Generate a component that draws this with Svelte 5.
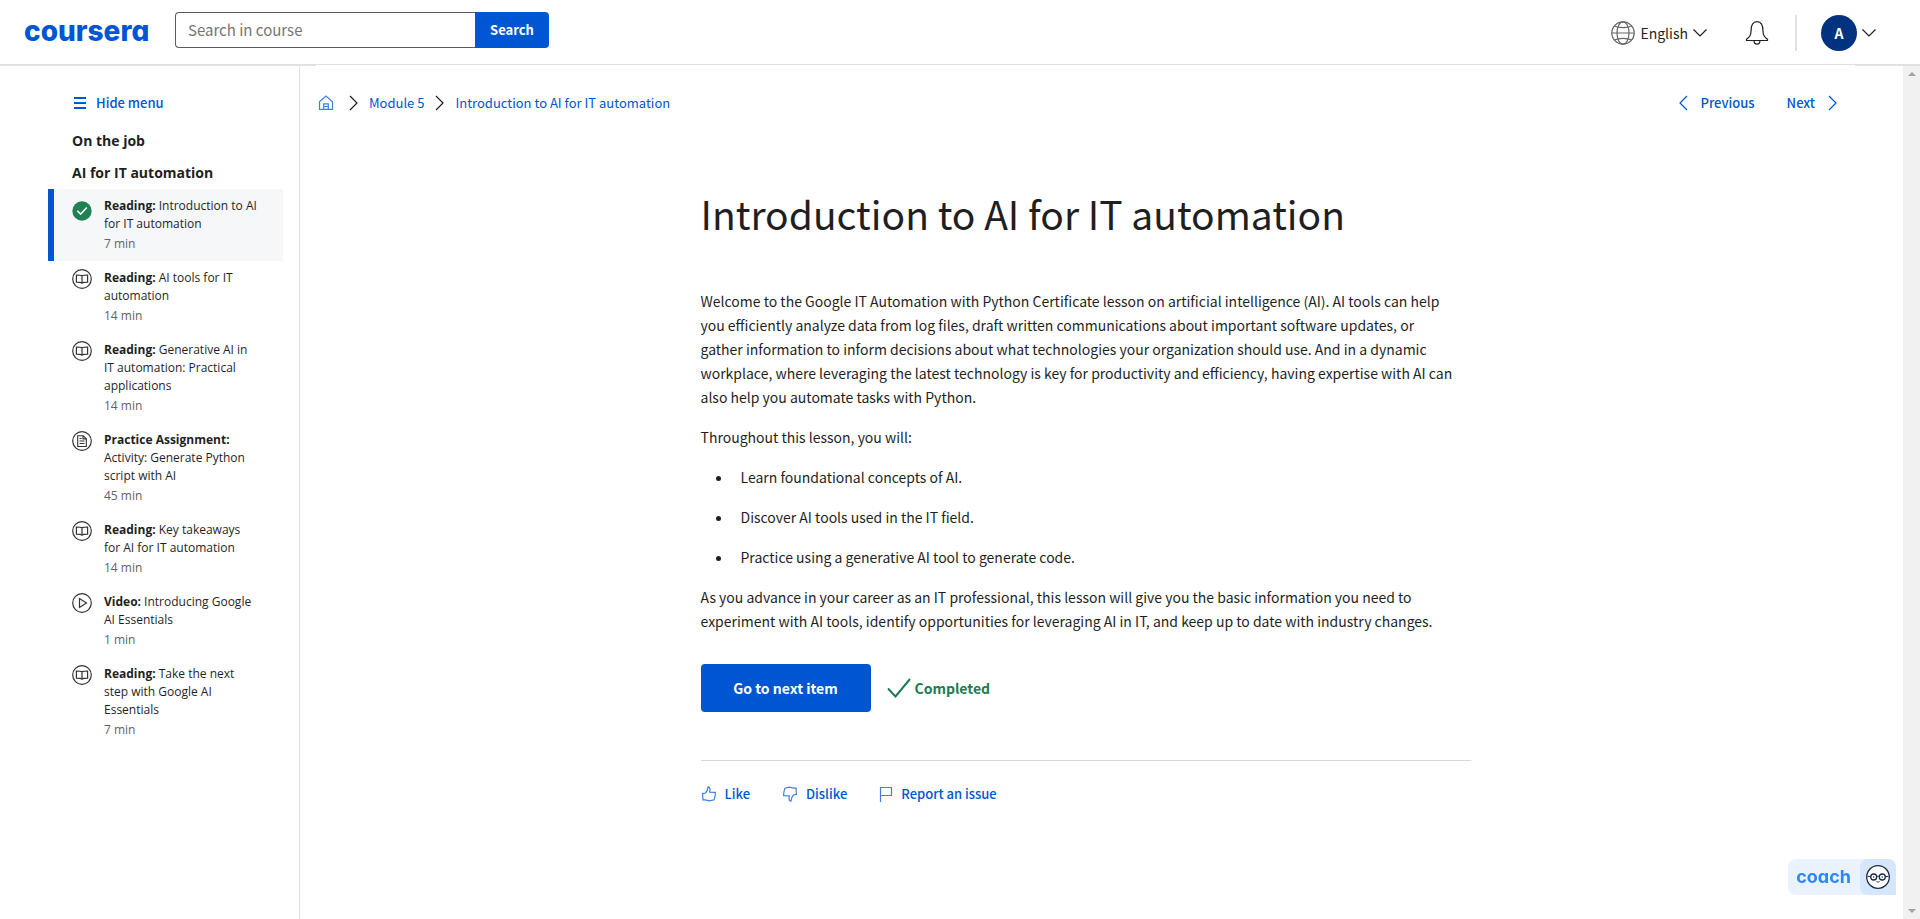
<script lang="ts">
  type Item = { kind: string; title: string; time: string; icon: 'book' | 'doc' | 'play' | 'done' };

  const items: Item[] = [
    { kind: 'Reading', title: 'Introduction to AI for IT automation', time: '7 min', icon: 'done' },
    { kind: 'Reading', title: 'AI tools for IT automation', time: '14 min', icon: 'book' },
    { kind: 'Reading', title: 'Generative AI in IT automation: Practical applications', time: '14 min', icon: 'book' },
    { kind: 'Practice Assignment', title: 'Activity: Generate Python script with AI', time: '45 min', icon: 'doc' },
    { kind: 'Reading', title: 'Key takeaways for AI for IT automation', time: '14 min', icon: 'book' },
    { kind: 'Video', title: 'Introducing Google AI Essentials', time: '1 min', icon: 'play' },
    { kind: 'Reading', title: 'Take the next step with Google AI Essentials', time: '7 min', icon: 'book' },
  ];

  const goals = [
    'Learn foundational concepts of AI.',
    'Discover AI tools used in the IT field.',
    'Practice using a generative AI tool to generate code.',
  ];
</script>

<div class="page">
  <header>
    <a class="logo" href="#home">coursera</a>
    <form class="search" role="search" onsubmit={(e) => e.preventDefault()}>
      <input type="text" aria-label="Search in course" placeholder="Search in course" />
      <button type="submit">Search</button>
    </form>
    <div class="tools">
      <button class="lang">
        <svg width="24" height="24" viewBox="0 0 24 24" fill="none" stroke="#666" stroke-width="1.2">
          <circle cx="12" cy="12" r="11.2" />
          <ellipse cx="12" cy="12" rx="6" ry="11.2" />
          <path d="M.8 12h22.4M3.400 5c4.500 2.200 12.700 2.200 17.200 0M3.400 19c4.500-2.200 12.700-2.200 17.200 0" />
        </svg>
        <span>English</span>
        <svg class="caret" width="14" height="8" viewBox="0 0 14 8" fill="none" stroke="#1f1f1f" stroke-width="1.2"><path d="M.5.5 7 7 13.500.5" /></svg>
      </button>
      <button class="bell" aria-label="Notifications">
        <svg width="24" height="24" viewBox="0 0 24 24" fill="none" stroke="#1f1f1f" stroke-width="1.2">
          <path d="M1.500 19.500v-1.300c2.500-1.600 4.500-4.500 4.500-8C6 4 8 .7 12 .7s6 3.300 6 9.500c0 3.500 2 6.400 4.500 8v1.300ZM9 19.500c0 2 1.300 3.600 3 3.600s3-1.600 3-3.600" />
        </svg>
      </button>
      <button class="account" aria-label="Account">
        <span class="avatar">A</span>
        <svg class="caret" width="14" height="8" viewBox="0 0 14 8" fill="none" stroke="#1f1f1f" stroke-width="1.2"><path d="M.5.5 7 7 13.500.5" /></svg>
      </button>
    </div>
  </header>

  <div class="body">
    <aside>
      <button class="hide">
        <svg width="12" height="12" viewBox="0 0 12 12" fill="#0056d2"><path d="M0 0h12v2H0zM0 5h12v2H0zM0 10h12v2H0z" /></svg>
        Hide menu
      </button>
      <h2>On the job</h2>
      <h3>AI for IT automation</h3>
      <nav aria-label="Lesson items">
        {#each items as item}
          <a class="item" class:active={item.icon === 'done'} href="#item">
            <svg width="20" height="20" viewBox="0 0 20 20" fill="none" stroke="#333" stroke-width="1.200">
              {#if item.icon === 'done'}
                <circle cx="10" cy="10" r="9.700" fill="#1d8354" stroke="none" />
                <path d="m5.300 9.800 3.400 3.300 6.100-6.500" stroke="#fff" stroke-width="1.500" />
              {:else}
                <circle cx="10" cy="10" r="9.300" />
                {#if item.icon === 'book'}
                  <path d="M10 6.900c-.8-.7-1.800-.9-5.600-.9v7.200c3.800 0 4.800.2 5.600 1 .8-.8 1.800-1 5.600-1V6c-3.800 0-4.800.2-5.600.9Zm0 0v7.800" />
                {:else if item.icon === 'doc'}
                  <path d="M5.700 4.700h5.500l3.100 3v7.800H5.700ZM11 4.700v3.200h3.300M7.500 7.500h2M7.500 10h5M7.500 12.500h5" stroke-width="1.100" />
                {:else}
                  <path d="M7.500 5.500v9l7-4.500Z" />
                {/if}
              {/if}
            </svg>
            <span class="label"><span><b>{item.kind}:</b> {item.title}</span><small>{item.time}</small></span>
          </a>
        {/each}
      </nav>
    </aside>

    <main>
      <div class="bar">
        <nav class="crumbs" aria-label="Breadcrumb">
          <a class="homelink" href="#home" aria-label="Home">
            <svg width="16" height="16" viewBox="0 0 16 16" fill="none" stroke="#3f7fde" stroke-width="1.200">
              <path d="M1.500 6.700 8 1l6.500 5.700v7.600h-13ZM5.700 14.300V8.900h4.600v5.400M5.700 11.500h4.600" />
            </svg>
          </a>
          <svg class="chev" width="9" height="16" viewBox="0 0 9 16" fill="none" stroke="#1f1f1f" stroke-width="1.200"><path d="m1 1 7 7-7 7" /></svg>
          <a href="#module">Module 5</a>
          <svg class="chev" width="9" height="16" viewBox="0 0 9 16" fill="none" stroke="#1f1f1f" stroke-width="1.200"><path d="m1 1 7 7-7 7" /></svg>
          <a href="#lesson">Introduction to AI for IT automation</a>
        </nav>
        <div class="pager">
          <a href="#previous"><svg width="9" height="16" viewBox="0 0 9 16" fill="none" stroke="#0056d2" stroke-width="1.200"><path d="M8 1 1 8l7 7" /></svg>Previous</a>
          <a href="#next">Next<svg width="9" height="16" viewBox="0 0 9 16" fill="none" stroke="#0056d2" stroke-width="1.200"><path d="m1 1 7 7-7 7" /></svg></a>
        </div>
      </div>

      <article>
        <h1>Introduction to AI for IT automation</h1>
        <p>Welcome to the Google IT Automation with Python Certificate lesson on artificial intelligence (AI). AI tools can help you efficiently analyze data from log files, draft written communications about important software updates, or gather information to inform decisions about what technologies your organization should use. And in a dynamic workplace, where leveraging the latest technology is key for productivity and efficiency, having expertise with AI can also help you automate tasks with Python.</p>
        <p>Throughout this lesson, you will:</p>
        <ul>
          {#each goals as goal}
            <li>{goal}</li>
          {/each}
        </ul>
        <p>As you advance in your career as an IT professional, this lesson will give you the basic information you need to experiment with AI tools, identify opportunities for leveraging AI in IT, and keep up to date with industry changes.</p>
        <div class="next">
          <button class="primary">Go to next item</button>
          <span class="completed">
            <svg width="24" height="20" viewBox="0 0 24 20" fill="none" stroke="#1d7c50" stroke-width="2"><path d="m1 10.500 7.500 8L23 1" /></svg>
            <span>Completed</span>
          </span>
        </div>
        <div class="feedback">
          <button>
            <svg width="16" height="16" viewBox="0 0 16 16" fill="none" stroke="#3f7fde" stroke-width="1.200"><path d="M1.600 7.600 4.500 7C6 5.500 6.800 3.800 7 .9c1.900.2 2.400 1.800 1.700 5.200l5.700.3-.3 3.600-1 3.800-4.600 1-4.300-.9H1.900Z" /></svg>
            Like
          </button>
          <button>
            <svg width="16" height="16" viewBox="0 0 16 16" fill="none" stroke="#3f7fde" stroke-width="1.200"><path d="M14.400 8.400 11.500 9C10 10.500 9.200 12.200 9 15.100c-1.900-.2-2.400-1.800-1.700-5.200L1.600 9.600 1.900 6l1-3.800 4.600-1 4.300.9h2.300Z" /></svg>
            Dislike
          </button>
          <button>
            <svg width="14" height="16" viewBox="0 0 14 16" fill="none" stroke="#3f7fde" stroke-width="1.200"><path d="M1.500 16V1.500h11v8h-11" /></svg>
            Report an issue
          </button>
        </div>
      </article>
    </main>

    <div class="scroll" aria-hidden="true"><i class="up"></i><i class="down"></i></div>
  </div>

  <button class="coach">
    <span class="word">coach</span>
    <span class="face">
      <svg width="24" height="24" viewBox="0 0 24 24" fill="none" stroke="#1c2b45" stroke-width="1.300">
        <circle cx="12" cy="12" r="11.300" fill="#fff" />
        <circle cx="7.700" cy="12" r="3" /><circle cx="16.300" cy="12" r="3" />
        <path d="M10.700 11.600c.8-.5 1.800-.5 2.600 0M1.500 11.300l3.200.3M22.500 11.300l-3.200.3M10.500 16.500c1 .7 2 .7 3 0" stroke-width="1" />
        <circle cx="7.700" cy="12" r=".7" fill="#1c2b45" stroke="none" /><circle cx="16.300" cy="12" r=".7" fill="#1c2b45" stroke="none" />
      </svg>
    </span>
  </button>
</div>

<style>
  :global(body) { margin: 0; background: #fff; }
  .page {
    --blue: #0056d2;
    min-height: 100vh;
    display: flex;
    flex-direction: column;
    color: #1f1f1f;
    font-family: "Noto Sans CJK SC", "Noto Sans", sans-serif;
    font-size: 14px;
    line-height: 24px;
  }
  *, *::before { box-sizing: border-box; }
  button { border: 0; padding: 0; background: none; font: inherit; color: inherit; cursor: pointer; }
  a { color: var(--blue); text-decoration: none; }
  svg { display: block; flex: none; }

  header {
    display: flex;
    align-items: center;
    height: 66px;
    border-bottom: 2px solid #e1e1e1;
    padding: 2px 44px 0 24px;
  }
  .logo { width: 151px; margin-bottom: 4px; font: 800 28px/36px Inter, sans-serif; font-feature-settings: "cv11"; }
  .search { display: flex; height: 36px; margin-bottom: 6px; }
  .search input {
    width: 300px;
    border: 1px solid #5b5b5b;
    border-right: 0;
    border-radius: 4px 0 0 4px;
    padding: 0 12px;
    font: inherit;
    font-size: 15px;
    background: #fff;
  }
  .search input::placeholder { color: #757575; opacity: 1; }
  .search button { width: 74px; border-radius: 0 4px 4px 0; background: var(--blue); color: #fff; font-weight: 700; font-size: 13px; }
  .tools { margin-left: auto; display: flex; align-items: center; }
  .lang { display: flex; align-items: center; gap: 5px; }
  .bell { margin-left: 38px; }
  .account { display: flex; align-items: center; gap: 5px; margin-left: 26px; border-left: 2px solid #e1e1e1; padding-left: 24px; }
  .avatar { width: 36px; height: 36px; border-radius: 50%; background: #00337f; color: #fff; font-weight: 700; line-height: 36px; }

  .body { flex: 1; display: flex; }
  aside { width: 300px; border-right: 1px solid #e1e1e1; padding: 25px 16px 24px 48px; font-family: "Open Sans", sans-serif; }
  .hide { display: flex; align-items: center; gap: 10px; margin-left: 26px; color: var(--blue); font: 500 13px/24px "Noto Sans CJK SC", sans-serif; }
  h2, h3 { margin: 0 0 0 24px; font-size: 14px; line-height: 20px; font-weight: 700; }
  h2 { margin-top: 16px; }
  h3 { margin-top: 12px; margin-bottom: 6px; }
  .item { display: flex; gap: 12px; padding: 8px 24px 6px; color: #1f1f1f; }
  .item.active { border-left: 6px solid var(--blue); padding-left: 18px; background: #f5f7f9; }
  .item.active svg { margin-top: 4px; }
  .label { display: flex; flex-direction: column; font-size: 12px; line-height: 18px; }
  .label b { font-weight: 700; }
  .label small { font-size: 12px; line-height: 22px; color: #636363; }

  main { flex: 1; min-width: 0; margin-top: -1px; padding: 0 48px 0 16px; }
  .bar { display: flex; justify-content: space-between; align-items: center; background: #fff; padding: 26px 18px 26px 2px; font-size: 13px; }
  .crumbs { display: flex; align-items: center; gap: 11px; }
  .homelink { margin-right: 4px; }
  .pager { display: flex; gap: 32px; font-weight: 500; }
  .pager a { display: flex; align-items: center; gap: 13px; }

  article { max-width: 770px; margin: 0 auto; padding: 42px 0 24px; }
  h1 { margin: 0 0 46px; font-size: 39px; line-height: 60px; font-weight: 400; }
  p { margin: 0 0 16px; padding-right: 12px; }
  ul { margin: 0 0 16px; padding-left: 32px; }
  li { margin-bottom: 16px; padding-left: 8px; }
  .next { display: flex; align-items: center; gap: 16px; padding: 15px 0 48px; border-bottom: 1px solid #d8d8d8; }
  .primary { width: 170px; height: 48px; border-radius: 4px; background: var(--blue); color: #fff; font-weight: 700; }
  .completed { display: flex; align-items: center; gap: 4px; color: #1d7c50; font-weight: 700; }
  .feedback { display: flex; gap: 32px; padding-top: 21px; color: var(--blue); font-size: 13px; font-weight: 500; }
  .feedback button { display: flex; align-items: center; gap: 8px; }

  .scroll { width: 17px; background: #f1f1f1; display: flex; flex-direction: column; justify-content: space-between; align-items: center; padding: 6px 0; }
  .scroll i { border: 4px solid transparent; }
  .scroll .up { border-top: 0; border-bottom-color: #a3a3a3; }
  .scroll .down { border-bottom: 0; border-top-color: #a3a3a3; }

  .coach { position: fixed; right: 24px; bottom: 24px; display: flex; align-items: center; height: 36px; border-radius: 8px 8px 0 8px; background: #eaf2ff; overflow: hidden; }
  .word { padding: 0 9px 0 8px; color: #2d87f8; font: 700 18px/36px Inter, sans-serif; font-feature-settings: "cv11"; }
  .face { width: 36px; height: 36px; display: grid; place-items: center; background: #d6e6ff; border-radius: 8px 0 0 8px; }
</style>
